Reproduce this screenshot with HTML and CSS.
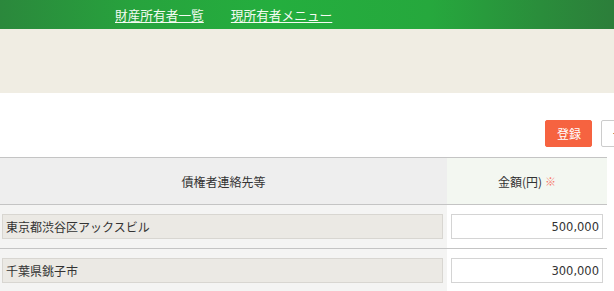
FILE: index.html
```html
<!DOCTYPE html>
<html lang="ja">
<head>
<meta charset="utf-8">
<title>債権者</title>
<link rel="stylesheet" href="styles.css">
</head>
<body>
<header class="topbar">
  <nav class="nav">
    <a href="#" class="nav-link">財産所有者一覧</a>
    <a href="#" class="nav-link">現所有者メニュー</a>
  </nav>
</header>
<div class="banner"></div>
<main class="main">
  <div class="toolbar">
    <button class="btn btn-primary">登録</button>
    <button class="btn btn-default">一時保存</button>
  </div>
  <div class="table">
    <div class="row head">
      <div class="cell c-contact">債権者連絡先等</div>
      <div class="cell c-amount">金額(円)<span class="req">※</span></div>
    </div>
    <div class="row">
      <div class="cell c-contact"><input class="field readonly" value="東京都渋谷区アックスビル" readonly></div>
      <div class="cell c-amount"><input class="field num" value="500,000"></div>
    </div>
    <div class="row">
      <div class="cell c-contact"><input class="field readonly" value="千葉県銚子市" readonly></div>
      <div class="cell c-amount"><input class="field num" value="300,000"></div>
    </div>
  </div>
</main>
</body>
</html>
```
FILE: styles.css
```css
html, body {
  margin: 0;
  padding: 0;
  overflow: hidden;
  background: #ffffff;
  font-family: "Noto Sans CJK JP", "Noto Sans", sans-serif;
  color: #333333;
}

.topbar {
  height: 29px;
  background: linear-gradient(to right, #2b883c 0%, #27a33d 22%, #24ae3e 45%, #26a83d 70%, #2a8d3b 88%, #2c7e3a 100%);
  display: flex;
  align-items: center;
}

.nav {
  display: flex;
  gap: 27px;
  padding-left: 115px;
}

.nav-link {
  color: #f4fbf2;
  font-size: 12.7px;
  line-height: 16px;
  text-decoration: underline;
  text-underline-offset: 2px;
}

.banner {
  height: 64px;
  background: #f0ede3;
}

.main {
  width: 700px;
}

.toolbar {
  display: flex;
  gap: 9px;
  padding: 27px 0 0 545px;
  height: 27px;
}

.btn {
  box-sizing: border-box;
  height: 27px;
  padding: 0 10px 0 11px;
  font-family: "Noto Sans CJK JP", sans-serif;
  font-size: 12px;
  border-radius: 2px;
  line-height: 25px;
  white-space: nowrap;
  flex: none;
}

.btn-primary {
  background: #f66340;
  color: #ffffff;
  border: 1px solid #f66340;
}

.btn-default {
  background: #ffffff;
  color: #333333;
  border: 1px solid #cccccc;
}

.table {
  margin-top: 10px;
  width: 607px;
  border-top: 1px solid #c4c4c4;
}

.row {
  display: grid;
  grid-template-columns: 447px 160px;
  border-bottom: 1px solid #c4c4c4;
}

.cell {
  padding: 9px 4px;
  font-size: 12px;
}

.c-contact {
  background: #f4f4f3;
  padding-left: 2px;
}

.c-amount {
  background: #ffffff;
}

.head .cell {
  height: 46px;
  padding: 0;
  display: flex;
  align-items: center;
  justify-content: center;
  color: #333333;
  font-size: 12px;
}

.head .c-contact {
  background: #eeeeee;
}

.head .c-amount {
  background: #f3f7f1;
}

.req {
  color: #f7776a;
  margin-left: 3px;
  font-size: 11px;
}

.field {
  display: block;
  box-sizing: border-box;
  width: 100%;
  height: 25px;
  margin: 0;
  border: 1px solid #d4d4d4;
  padding: 0 3px;
  font-family: "Noto Sans CJK JP", sans-serif;
  font-size: 12px;
  color: #333333;
  background: #ffffff;
  outline: none;
}

.readonly {
  background: #ebe9e4;
  border-color: #d8d6d1;
}

.num {
  text-align: right;
  font-family: "DejaVu Sans", sans-serif;
  font-size: 11.5px;
  padding-right: 3px;
}
```
